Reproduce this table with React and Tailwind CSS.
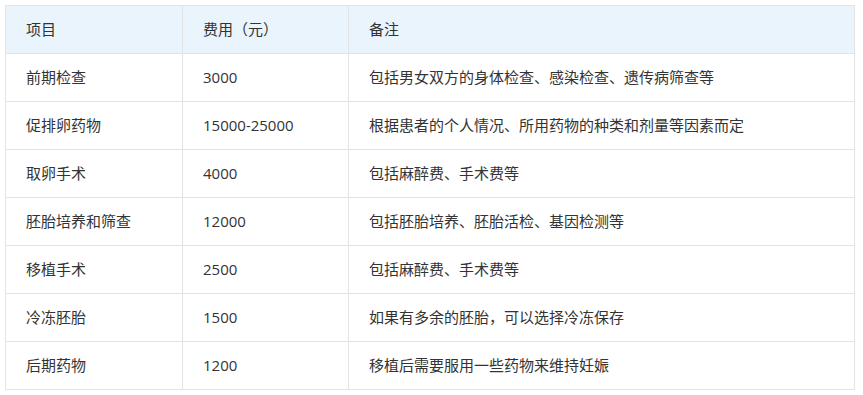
import React from "react";

const rows = [
  ["前期检查", "3000", "包括男女双方的身体检查、感染检查、遗传病筛查等"],
  ["促排卵药物", "15000-25000", "根据患者的个人情况、所用药物的种类和剂量等因素而定"],
  ["取卵手术", "4000", "包括麻醉费、手术费等"],
  ["胚胎培养和筛查", "12000", "包括胚胎培养、胚胎活检、基因检测等"],
  ["移植手术", "2500", "包括麻醉费、手术费等"],
  ["冷冻胚胎", "1500", "如果有多余的胚胎，可以选择冷冻保存"],
  ["后期药物", "1200", "移植后需要服用一些药物来维持妊娠"],
];

function Cell({ children, header }) {
  return (
    <div
      className={`flex items-center h-[48px] pl-[20px] border-r border-b border-[#e3e3e3] ${
        header ? "bg-[#eaf4fd]" : "bg-white"
      }`}
    >
      {children}
    </div>
  );
}

export default function App() {
  return (
    <div className="bg-white w-[863px] h-[395px] p-[5px] text-[15px] text-[#333333] [font-family:'Open_Sans','Noto_Sans_CJK_SC',sans-serif]">
      <div className="grid grid-cols-[177px_166px_506px] border-l border-t border-[#e3e3e3] w-[850px]">
        <Cell header>项目</Cell>
        <Cell header>费用（元）</Cell>
        <Cell header>备注</Cell>
        {rows.map((r, i) => (
          <React.Fragment key={i}>
            <Cell>{r[0]}</Cell>
            <Cell>{r[1]}</Cell>
            <Cell>{r[2]}</Cell>
          </React.Fragment>
        ))}
      </div>
    </div>
  );
}
